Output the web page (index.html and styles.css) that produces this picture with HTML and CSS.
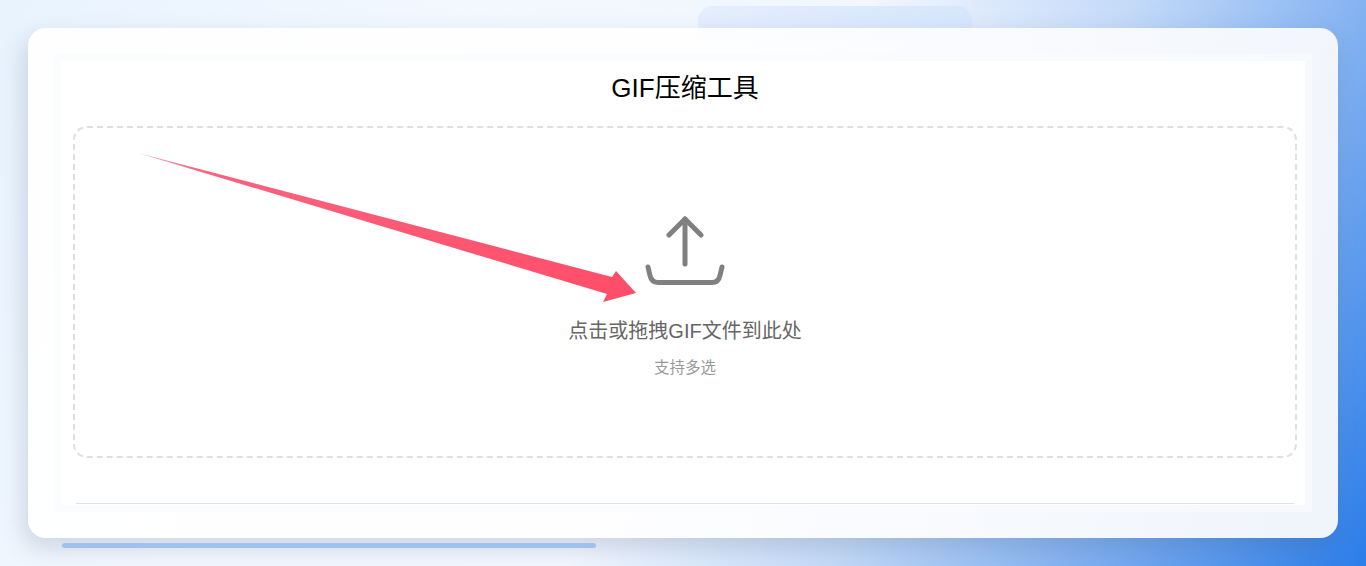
FILE: index.html
```html
<!DOCTYPE html>
<html lang="zh-CN">
<head>
    <meta charset="UTF-8">
    <title>GIF压缩工具</title>
    <link rel="stylesheet" href="styles.css">
</head>
<body>
<div class="tab"></div>
<main class="card">
    <div class="card__ring">
        <div class="tool">
            <h1 class="tool__title">GIF压缩工具</h1>
            <div class="drop">
                <svg class="drop__icon" width="80" height="70" viewBox="0 0 80 70" fill="none" stroke="#808080" stroke-width="5" stroke-linecap="round" stroke-linejoin="round">
                    <path d="M40 3V48"/>
                    <path d="M24 19L40 3L56 19"/>
                    <path d="M3 51L5 59.500Q6.500 66.500 13 66.500H67Q73.500 66.500 75 59.500L77 51"/>
                </svg>
                <p class="drop__text">点击或拖拽GIF文件到此处</p>
                <p class="drop__hint">支持多选</p>
                <svg class="arrow" width="520" height="170" viewBox="0 0 520 170">
                    <defs>
                        <linearGradient id="arrow-fill" x1="0" y1="0" x2="1" y2="0">
                            <stop offset="0" stop-color="#f7a9b8"/>
                            <stop offset="0.12" stop-color="#f9647f"/>
                            <stop offset="1" stop-color="#ff4d69"/>
                        </linearGradient>
                    </defs>
                    <path fill="url(#arrow-fill)" d="M0 0L474 124L478 118L498 140L465 149L469 141Z"/>
                </svg>
            </div>
            <div class="tool__rule"></div>
        </div>
    </div>
</main>
<div class="scrollbar"></div>
</body>
</html>
```

FILE: styles.css
```css
* {
    box-sizing: border-box;
}
html,
body {
    height: 100%;
}
body {
    margin: 0;
    padding: 6px 28px 0;
    overflow: hidden;
    font-family: "Liberation Sans", "Noto Sans CJK SC", sans-serif;
    background: linear-gradient(118deg, #e8f3fe 0%, #f3f8ff 28%, #f2f7ff 52%, #c4daf8 68%, #76aaf0 85%, #2b7de9 100%);
}
.tab {
    width: 274px;
    height: 34px;
    margin-left: 670px;
    border-radius: 14px 14px 0 0;
    background: linear-gradient(100deg, #e4eefd, #d6e6fc);
}
.card {
    position: relative;
    height: 510px;
    margin-top: -12px;
    padding: 26px;
    border-radius: 18px;
    background: linear-gradient(90deg, rgba(255, 255, 255, 0.95), rgba(254, 254, 255, 0.95) 55%, rgba(246, 248, 252, 0.97));
    box-shadow: -4px 10px 24px rgba(60, 80, 110, 0.2);
}
.card__ring {
    height: 100%;
    padding: 7px;
    background: rgba(250, 251, 253, 0.7);
}
.tool {
    display: flex;
    flex-direction: column;
    height: 100%;
    padding: 0 8px 0 12px;
    background: #fff;
}
.tool__title {
    margin: 0;
    height: 65px;
    color: #000;
    font-size: 26px;
    font-weight: 400;
    line-height: 54px;
    text-align: center;
}
.drop {
    position: relative;
    display: flex;
    flex-direction: column;
    align-items: center;
    height: 332px;
    padding-top: 88px;
    border: 2px dashed #e0e0e0;
    border-radius: 14px;
}
.drop__icon {
    margin-bottom: 31px;
}
.drop__text {
    margin: 0 0 12px;
    color: #666;
    font-size: 20px;
    line-height: 28px;
}
.drop__hint {
    margin: 0;
    color: #999;
    font-size: 15.500px;
    line-height: 22px;
}
.arrow {
    position: absolute;
    left: 63px;
    top: 25px;
}
.tool__rule {
    height: 1px;
    margin: 45px 3px 0;
    background: #e2e2e2;
}
.scrollbar {
    position: relative;
    width: 534px;
    height: 5px;
    margin: 5px 0 0 34px;
    border-radius: 3px;
    background: #a0c0ee;
}
```
